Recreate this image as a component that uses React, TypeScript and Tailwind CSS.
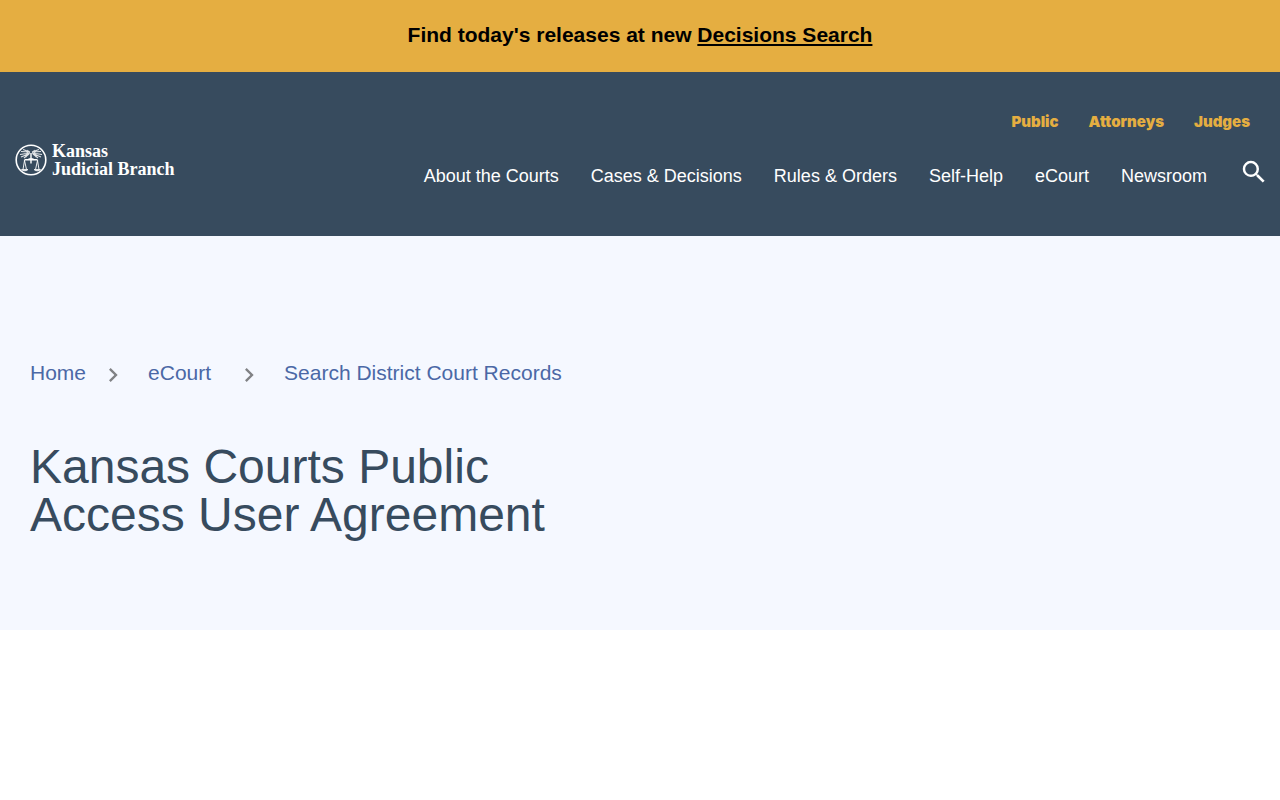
import { MdChevronRight, MdSearch } from 'react-icons/md';

const AUDIENCE_LINKS = ['Public', 'Attorneys', 'Judges'];

const MAIN_LINKS = [
  'About the Courts',
  'Cases & Decisions',
  'Rules & Orders',
  'Self-Help',
  'eCourt',
  'Newsroom',
];

function Seal() {
  return (
    <svg viewBox="0 0 32 32" className="h-8 w-8 shrink-0" fill="none" stroke="currentColor" aria-hidden="true">
      <circle cx="16" cy="16" r="14.8" strokeWidth="1.6" />
      {/* wheat */}
      <path
        d="M15 8 6 7.500M15 9 5 10.500M15 8 8 5.500M14.500 9.500 6 13M14 10 9 14M13 6 11 13M17 8 26 7.500M17 9 27 10.500M17 8 24 5.500M17.500 9.500 26 13M18 10 23 14M19 6 21 13"
        strokeWidth="1.200"
        opacity="0.85"
      />
      {/* scales */}
      <path d="M16 9v10.500M13.500 15h5M9 16.500l1.500-.8h11l1.500.8" strokeWidth="1.400" />
      <path d="M9.500 16.500 8 25.500M9.500 16.500 11.500 25.500M22.500 16.500 20.500 25.500M22.500 16.500 24 25.500" strokeWidth="0.900" />
      <path d="M6.500 25.500h6.500c-1 1.800-5.500 1.800-6.500 0ZM19 25.500h6.500c-1 1.800-5.500 1.800-6.500 0Z" fill="currentColor" strokeWidth="0.700" />
    </svg>
  );
}

function Header() {
  return (
    <header className="flex items-center justify-between bg-[#374b5e] px-[15px] pt-9 pb-11 text-white">
      <a href="#" className="flex items-center gap-[5px] pt-5">
        <Seal />
        <span className="font-['Liberation_Serif',serif] text-lg leading-[18px] font-bold">
          Kansas
          <br />
          Judicial Branch
        </span>
      </a>

      <div className="flex flex-col items-end gap-4">
        <nav aria-label="Audience" className="flex gap-[30px] pr-[15px] font-['Inter',sans-serif] text-[15px] leading-7 font-black text-[#e5ae41]">
          {AUDIENCE_LINKS.map(label => (
            <a key={label} href="#">{label}</a>
          ))}
        </nav>
        <div className="flex items-start">
          <nav aria-label="Main" className="flex gap-8 pt-2 text-lg leading-8">
            {MAIN_LINKS.map(label => (
              <a key={label} href="#">{label}</a>
            ))}
          </nav>
          <button type="button" aria-label="Search" className="-mr-1 ml-8 h-10">
            <MdSearch size={30} />
          </button>
        </div>
      </div>
    </header>
  );
}

function Breadcrumbs() {
  return (
    <nav aria-label="Breadcrumb">
      <ol className="flex items-center text-[21px] leading-8 text-[#4b68a6]">
        <li><a href="#">Home</a></li>
        <li aria-hidden="true" className="pt-1 pr-[21px] pl-[13px] text-[#808285]"><MdChevronRight size={28} /></li>
        <li><a href="#">eCourt</a></li>
        <li aria-hidden="true" className="pt-1 pr-[21px] pl-6 text-[#808285]"><MdChevronRight size={28} /></li>
        <li><a href="#">Search District Court Records</a></li>
      </ol>
    </nav>
  );
}

export default function App() {
  return (
    <div className="min-h-screen bg-white font-['Liberation_Sans',Arial,sans-serif]">
      <div className="bg-[#e5ae41] px-4 pt-[21px] pb-[23px] text-center text-[21px] leading-7 font-bold text-black">
        Find today's releases at new <a href="#" className="underline">Decisions Search</a>
      </div>
      <Header />
      <main>
        <section className="bg-[#f5f8ff] px-[30px] pt-[121px] pb-[91px]">
          <Breadcrumbs />
          <h1 className="mt-[54px] max-w-[560px] text-5xl leading-none text-[#374b5e]">
            Kansas Courts Public Access User Agreement
          </h1>
        </section>
      </main>
    </div>
  );
}
